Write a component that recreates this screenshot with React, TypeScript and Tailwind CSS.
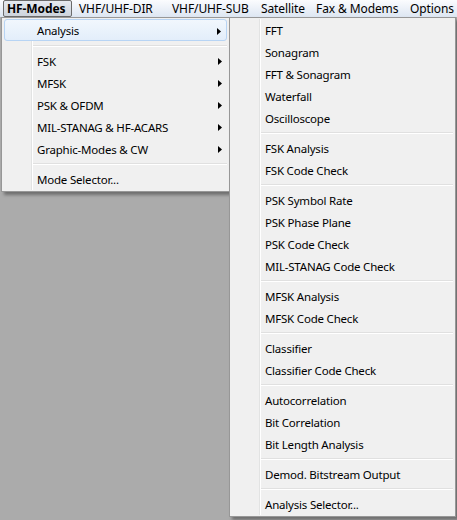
import React from "react";

type Entry = { label: string; arrow?: boolean; active?: boolean } | "sep" | "sep9";

const modesMenu: Entry[] = [
  { label: "Analysis", arrow: true, active: true },
  "sep9",
  { label: "FSK", arrow: true },
  { label: "MFSK", arrow: true },
  { label: "PSK & OFDM", arrow: true },
  { label: "MIL-STANAG & HF-ACARS", arrow: true },
  { label: "Graphic-Modes & CW", arrow: true },
  "sep",
  { label: "Mode Selector..." },
];

const analysisMenu: Entry[] = [
  { label: "FFT" },
  { label: "Sonagram" },
  { label: "FFT & Sonagram" },
  { label: "Waterfall" },
  { label: "Oscilloscope" },
  "sep",
  { label: "FSK Analysis" },
  { label: "FSK Code Check" },
  "sep",
  { label: "PSK Symbol Rate" },
  { label: "PSK Phase Plane" },
  { label: "PSK Code Check" },
  { label: "MIL-STANAG Code Check" },
  "sep",
  { label: "MFSK Analysis" },
  { label: "MFSK Code Check" },
  "sep",
  { label: "Classifier" },
  { label: "Classifier Code Check" },
  "sep",
  { label: "Autocorrelation" },
  { label: "Bit Correlation" },
  { label: "Bit Length Analysis" },
  "sep",
  { label: "Demod. Bitstream Output" },
  "sep",
  { label: "Analysis Selector..." },
];

const bar = [
  { label: "HF-Modes", w: "w-[69px]", open: true },
  { label: "VHF/UHF-DIR", w: "w-[93px]" },
  { label: "VHF/UHF-SUB", w: "w-[89px]" },
  { label: "Satellite", w: "w-[55px]" },
  { label: "Fax & Modems", w: "w-[94px]" },
  { label: "Options", w: "w-[54px]" },
];

function Arrow() {
  return (
    <svg width="4" height="7" viewBox="0 0 4 7" className="absolute right-[5px] top-[8px]">
      <path d="M0 0 L4 3.5 L0 7 Z" fill="#000" />
    </svg>
  );
}

function Menu({ items }: { items: Entry[] }) {
  return (
    <div className="relative py-px px-[2px]">
      {/* icon gutter */}
      <div className="absolute left-[29px] top-px bottom-px w-px bg-[#e2e3e3]" />
      <div className="absolute left-[30px] top-px bottom-px w-px bg-white" />
      {items.map((it, i) =>
        it === "sep" || it === "sep9" ? (
          <div
            key={i}
            className={`${it === "sep9" ? "h-[9px]" : "h-[8px]"} flex flex-col justify-center pl-[28px]`}
          >
            <div className="h-px bg-[#e0e0e0]" />
            <div className="h-px bg-white" />
          </div>
        ) : (
          <div
            key={i}
            className={`relative h-[22px] flex items-center pl-[33px] pt-[2px] ${
              it.active
                ? "rounded-[3px] border border-[#b7d4f4] bg-gradient-to-b from-[#f1f7fd] to-[#e3eefa]"
                : ""
            }`}
          >
            <span className={it.active ? "-ml-px" : ""}>{it.label}</span>
            {it.arrow && <Arrow />}
          </div>
        )
      )}
    </div>
  );
}

export default function App() {
  return (
    <div
      className="relative w-[457px] h-[520px] overflow-hidden bg-[#ababab] text-[11.5px] tracking-[-0.2px] text-black"
      style={{ fontFamily: '"Noto Sans", "Open Sans", sans-serif' }}
    >
      <div className="h-[17px] flex bg-gradient-to-b from-[#fbfcfe] to-[#dde6f2] pl-[3px] text-[12px] tracking-[-0.1px]">
        {bar.map((b) => (
          <div
            key={b.label}
            className={`${b.w} h-[17px] flex items-center leading-none ${
              b.open
                ? "font-bold pl-[3px] rounded-[2px] border border-[#6b6b6b] bg-gradient-to-b from-[#e6eaef] to-[#cdd3dc]"
                : "pl-[7px]"
            }`}
          >
            {b.label}
          </div>
        ))}
      </div>

      <div className="absolute left-[1px] top-[17px] w-[229px] border border-[#979797] bg-[#f0f0f0] shadow-[3px_3px_3px_rgba(0,0,0,0.35)]">
        <Menu items={modesMenu} />
      </div>

      <div className="absolute left-[229px] top-[17px] w-[227px] border border-[#979797] bg-[#f0f0f0] shadow-[3px_3px_3px_rgba(0,0,0,0.35)]">
        <Menu items={analysisMenu} />
      </div>
    </div>
  );
}
